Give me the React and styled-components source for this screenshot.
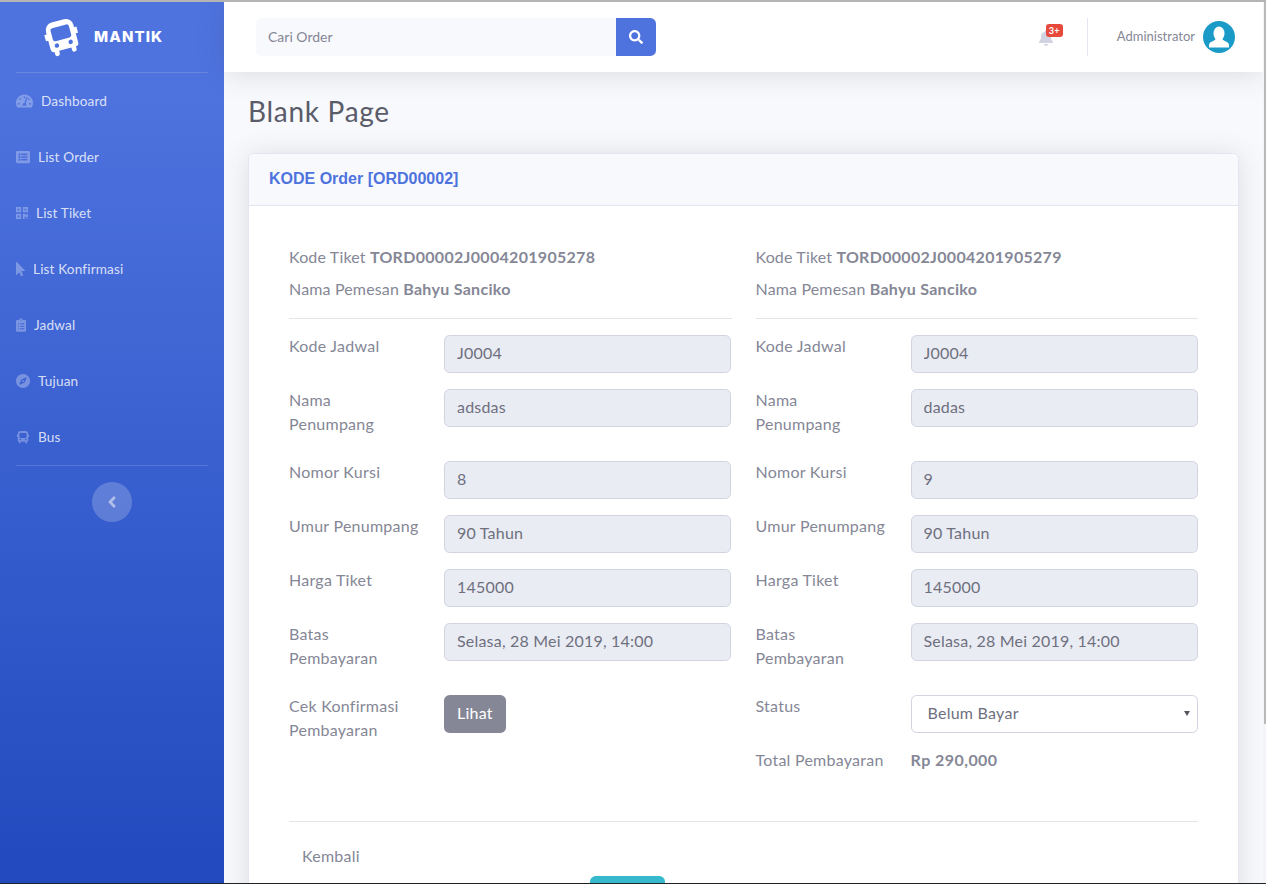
import React from 'react'
import styled, { createGlobalStyle } from 'styled-components'
import {
  FaTachometerAlt,
  FaListAlt,
  FaQrcode,
  FaMousePointer,
  FaClipboardList,
  FaCompass,
  FaBell,
  FaSearch,
  FaAngleLeft,
} from 'react-icons/fa'

const GlobalStyle = createGlobalStyle`
  html, body {
    margin: 0;
    height: 100%;
    overflow: hidden;
  }
  * {
    box-sizing: border-box;
  }
  body {
    font-family: 'Lato', 'Open Sans', sans-serif;
    font-size: 16px;
    line-height: 24px;
    letter-spacing: 0.25px;
    color: #858796;
  }
`

const Frame = styled.div`
  height: 884px;
  display: flex;
  overflow: hidden;
  background: #f8f9fc;
  border-top: 2px solid #b4b4b4;
  border-bottom: 1px solid #1f2326;
`

const Sidebar = styled.aside`
  width: 224px;
  flex: none;
  background: linear-gradient(180deg, #4e73df 10%, #224abe 100%);
`

const Brand = styled.div`
  height: 70px;
  display: flex;
  align-items: center;
  padding-left: 43px;
  gap: 13px;
  svg {
    width: 38px;
    height: 38px;
    transform: rotate(-15deg);
    fill: #fff;
  }
`

const BrandName = styled.span`
  font-family: 'Inter', sans-serif;
  font-weight: 800;
  font-size: 15px;
  letter-spacing: 1.1px;
  color: #fff;
`

const SideRule = styled.hr`
  margin: 0 16px;
  border: 0;
  border-top: 1px solid rgba(255, 255, 255, 0.15);
`

const NavItem = styled.a`
  height: 56px;
  display: flex;
  align-items: center;
  gap: 8px;
  padding-left: 16px;
  font-size: 13.6px;
  letter-spacing: 0.15px;
  color: rgba(255, 255, 255, 0.8);
  svg {
    height: 16px;
    width: ${(p) => p.$iconWidth}px;
    fill: rgba(255, 255, 255, 0.3);
  }
`

const Toggle = styled.button`
  display: flex;
  align-items: center;
  justify-content: center;
  width: 40px;
  height: 40px;
  margin: 16px auto 0;
  padding: 0;
  border: 0;
  border-radius: 50%;
  background: rgba(255, 255, 255, 0.2);
  color: rgba(255, 255, 255, 0.5);
  font-size: 18px;
`

const Main = styled.main`
  flex: 1;
  min-width: 0;
  display: flex;
  flex-direction: column;
`

const Topbar = styled.header`
  height: 70px;
  flex: none;
  display: flex;
  align-items: center;
  padding: 0 28px 0 32px;
  background: #fff;
  box-shadow: 0 2.4px 28px 0 rgba(58, 59, 69, 0.15);
`

const Search = styled.form`
  display: flex;
  width: 400px;
  height: 38px;
`

const SearchInput = styled.input`
  flex: 1;
  min-width: 0;
  padding: 0 12px 2px;
  border: 0;
  border-radius: 5.6px 0 0 5.6px;
  background: #f8f9fc;
  font-family: inherit;
  font-size: 14px;
  color: #6e707e;
  &::placeholder {
    color: #858796;
    opacity: 1;
  }
`

const SearchButton = styled.button`
  width: 40px;
  display: flex;
  align-items: center;
  justify-content: center;
  padding: 0;
  border: 0;
  border-radius: 0 5.6px 5.6px 0;
  background: #4e73df;
  color: #fff;
  font-size: 14px;
`

const TopRight = styled.div`
  margin-left: auto;
  display: flex;
  align-items: center;
`

const BellWrap = styled.div`
  position: relative;
  display: flex;
  margin-top: 1px;
  color: #d1d3e2;
  font-size: 16px;
`

const Badge = styled.span`
  position: absolute;
  top: -6px;
  left: 8px;
  padding: 0 3px;
  height: 13px;
  border-radius: 3px;
  background: #e74a3b;
  color: #fff;
  font-size: 9px;
  font-weight: 700;
  line-height: 13px;
`

const TopDivider = styled.div`
  width: 1px;
  height: 38px;
  margin: 0 29px 0 33px;
  background: #e3e6f0;
`

const UserName = styled.span`
  margin-right: 8px;
  padding-bottom: 2px;
  font-size: 13px;
  letter-spacing: 0;
  color: #858796;
`

const Avatar = styled.svg`
  display: block;
  width: 32px;
  height: 32px;
`

const Scrollbar = styled.div`
  width: 3px;
  flex: none;
  background: #f3f4f7;
`

const Thumb = styled.div`
  width: 2px;
  height: 722px;
  margin-left: 1px;
  background: #b9b9b9;
`

const Content = styled.div`
  flex: 1;
  min-height: 0;
  overflow: hidden;
  padding: 23px 24px 0;
`

const Title = styled.h1`
  margin: 0 0 24px;
  font-size: 28px;
  font-weight: 400;
  line-height: 33.6px;
  letter-spacing: 0.7px;
  color: #5a5c69;
`

const Card = styled.section`
  background: #fff;
  border: 1px solid #e3e6f0;
  border-radius: 5.6px;
  box-shadow: 0 2.4px 28px 0 rgba(58, 59, 69, 0.15);
`

const CardHeader = styled.div`
  height: 52px;
  display: flex;
  align-items: center;
  padding: 0 20px;
  background: #f8f9fc;
  border-bottom: 1px solid #e3e6f0;
  border-radius: 5.6px 5.6px 0 0;
`

const CardTitle = styled.h6`
  margin: 0;
  font-family: 'Liberation Sans', sans-serif;
  font-size: 16px;
  font-weight: 700;
  letter-spacing: 0;
  color: #4e73df;
`

const CardBody = styled.div`
  padding: 39px 40px 20px;
`

const Columns = styled.div`
  display: grid;
  grid-template-columns: 1fr 1fr;
  column-gap: 24px;
`

const InfoLine = styled.p`
  margin: 0 0 8px;
  letter-spacing: 0.15px;
  b {
    letter-spacing: 0.3px;
  }
`

const Rule = styled.hr`
  margin: ${(p) => p.$top || 17}px 0 16px;
  border: 0;
  border-top: 1px solid #e5e5e5;
`

const FormRow = styled.div`
  display: grid;
  grid-template-columns: 155px 287px;
  align-items: start;
  margin-bottom: 16px;
`

const Label = styled.label`
  display: block;
  margin: -1px 0 9px;
`

const TotalValue = styled.b`
  margin-top: -1px;
  letter-spacing: 0.45px;
`

const Field = styled.input`
  display: block;
  width: 100%;
  height: 38px;
  padding: 5px 12px 7px;
  border: 1px solid #d1d3e2;
  border-radius: 5.6px;
  background: #eaecf4;
  font-family: inherit;
  font-size: 16px;
  letter-spacing: 0.2px;
  color: #6e707e;
`

const SelectWrap = styled.div`
  position: relative;
  &::after {
    content: '';
    position: absolute;
    top: 16px;
    right: 8px;
    border-style: solid;
    border-width: 5px 3px 0;
    border-color: #55565f transparent transparent;
    pointer-events: none;
  }
`

const StatusSelect = styled.select`
  display: block;
  width: 100%;
  height: 38px;
  padding: 5px 12px 7px 16px;
  border: 1px solid #d1d3e2;
  border-radius: 5.6px;
  background: #fff;
  appearance: none;
  font-family: inherit;
  font-size: 16px;
  letter-spacing: 0.25px;
  color: #6e707e;
`

const Button = styled.button`
  display: inline-block;
  height: 38px;
  padding: 0 13px 2px;
  border: 0;
  border-radius: 5.6px;
  background: ${(p) => p.$bg || 'transparent'};
  color: ${(p) => (p.$bg ? '#fff' : '#858796')};
  font-family: inherit;
  font-size: 16px;
  letter-spacing: 0.25px;
`

const SubmitRow = styled.div`
  padding-left: 301px;
`

// only the top edge of this button is on screen, its label lies below the fold
const SubmitButton = styled(Button)`
  display: block;
  width: 75px;
`

const BusIcon = () => (
  <svg viewBox='0 0 24 24'>
    <path
      fillRule='evenodd'
      d='M8 1.500h8a5 5 0 0 1 5 5V8h1.500v4H21v6a2 2 0 0 1-2 2v1.500a1.500 1.500 0 0 1-3 0V20H8v1.500a1.500 1.500 0 0 1-3 0V20a2 2 0 0 1-2-2v-6H1.500V8H3V6.500a5 5 0 0 1 5-5z M7.500 5A1.500 1.500 0 0 0 6 6.500V12a1.500 1.500 0 0 0 1.500 1.500h9A1.500 1.500 0 0 0 18 12V6.500A1.500 1.500 0 0 0 16.500 5z M7.500 15a1.400 1.400 0 1 0 0 2.800a1.400 1.400 0 1 0 0-2.800z M16.500 15a1.400 1.400 0 1 0 0 2.800a1.400 1.400 0 1 0 0-2.800z'
    />
  </svg>
)

const menu = [
  { label: 'Dashboard', icon: <FaTachometerAlt />, width: 17 },
  { label: 'List Order', icon: <FaListAlt />, width: 14 },
  { label: 'List Tiket', icon: <FaQrcode />, width: 12 },
  { label: 'List Konfirmasi', icon: <FaMousePointer />, width: 9 },
  { label: 'Jadwal', icon: <FaClipboardList />, width: 10 },
  { label: 'Tujuan', icon: <FaCompass />, width: 14 },
  { label: 'Bus', icon: <BusIcon />, width: 14 },
]

const tickets = [
  { code: 'TORD00002J0004201905278', name: 'adsdas', seat: '8' },
  { code: 'TORD00002J0004201905279', name: 'dadas', seat: '9' },
]

const TicketColumn = ({ ticket, children }) => (
  <div>
    <InfoLine>Kode Tiket <b>{ticket.code}</b></InfoLine>
    <InfoLine>Nama Pemesan <b>Bahyu Sanciko</b></InfoLine>
    <Rule />
    <FormRow>
      <Label>Kode Jadwal</Label>
      <Field readOnly value='J0004' />
    </FormRow>
    <FormRow>
      <Label>Nama<br />Penumpang</Label>
      <Field readOnly value={ticket.name} />
    </FormRow>
    <FormRow>
      <Label>Nomor Kursi</Label>
      <Field readOnly value={ticket.seat} />
    </FormRow>
    <FormRow>
      <Label>Umur Penumpang</Label>
      <Field readOnly value='90 Tahun' />
    </FormRow>
    <FormRow>
      <Label>Harga Tiket</Label>
      <Field readOnly value='145000' />
    </FormRow>
    <FormRow>
      <Label>Batas<br />Pembayaran</Label>
      <Field readOnly value='Selasa, 28 Mei 2019, 14:00' />
    </FormRow>
    {children}
  </div>
)

export default function App() {
  return (
    <Frame>
      <GlobalStyle />
      <Sidebar>
        <Brand>
          <BusIcon />
          <BrandName>MANTIK</BrandName>
        </Brand>
        <SideRule />
        <nav>
          {menu.map((m) => (
            <NavItem key={m.label} $iconWidth={m.width}>
              {m.icon}
              <span>{m.label}</span>
            </NavItem>
          ))}
        </nav>
        <SideRule />
        <Toggle aria-label='Tutup menu'><FaAngleLeft /></Toggle>
      </Sidebar>
      <Main>
        <Topbar>
          <Search>
            <SearchInput placeholder='Cari Order' />
            <SearchButton type='button' aria-label='Cari'><FaSearch /></SearchButton>
          </Search>
          <TopRight>
            <BellWrap>
              <FaBell />
              <Badge>3+</Badge>
            </BellWrap>
            <TopDivider />
            <UserName>Administrator</UserName>
            <Avatar viewBox='0 0 32 32'>
              <defs>
                <clipPath id='avatarClip'><circle cx='16' cy='16' r='16' /></clipPath>
              </defs>
              <circle cx='16' cy='16' r='16' fill='#1a9bc7' />
              <g clipPath='url(#avatarClip)' fill='#fff'>
                <ellipse cx='16' cy='12.500' rx='5.500' ry='7' />
                <path d='M12.500 18c0 2-6.500 2.500-6.500 6v2.500h20V24c0-3.500-6.500-4-6.500-6z' />
              </g>
            </Avatar>
          </TopRight>
        </Topbar>
        <Content>
          <Title>Blank Page</Title>
          <Card>
            <CardHeader>
              <CardTitle>KODE Order [ORD00002]</CardTitle>
            </CardHeader>
            <CardBody>
              <Columns>
                <TicketColumn ticket={tickets[0]}>
                  <FormRow>
                    <Label>Cek Konfirmasi<br />Pembayaran</Label>
                    <div><Button $bg='#858796'>Lihat</Button></div>
                  </FormRow>
                </TicketColumn>
                <TicketColumn ticket={tickets[1]}>
                  <FormRow>
                    <Label>Status</Label>
                    <SelectWrap>
                      <StatusSelect defaultValue='Belum Bayar'>
                        <option>Belum Bayar</option>
                        <option>Sudah Bayar</option>
                      </StatusSelect>
                    </SelectWrap>
                  </FormRow>
                  <FormRow>
                    <Label>Total Pembayaran</Label>
                    <TotalValue>Rp 290,000</TotalValue>
                  </FormRow>
                </TicketColumn>
              </Columns>
              <Rule $top={24} />
              <Button>Kembali</Button>
              <SubmitRow>
                <SubmitButton $bg='#36b9cc' aria-label='Simpan' />
              </SubmitRow>
            </CardBody>
          </Card>
        </Content>
      </Main>
      <Scrollbar><Thumb /></Scrollbar>
    </Frame>
  )
}
